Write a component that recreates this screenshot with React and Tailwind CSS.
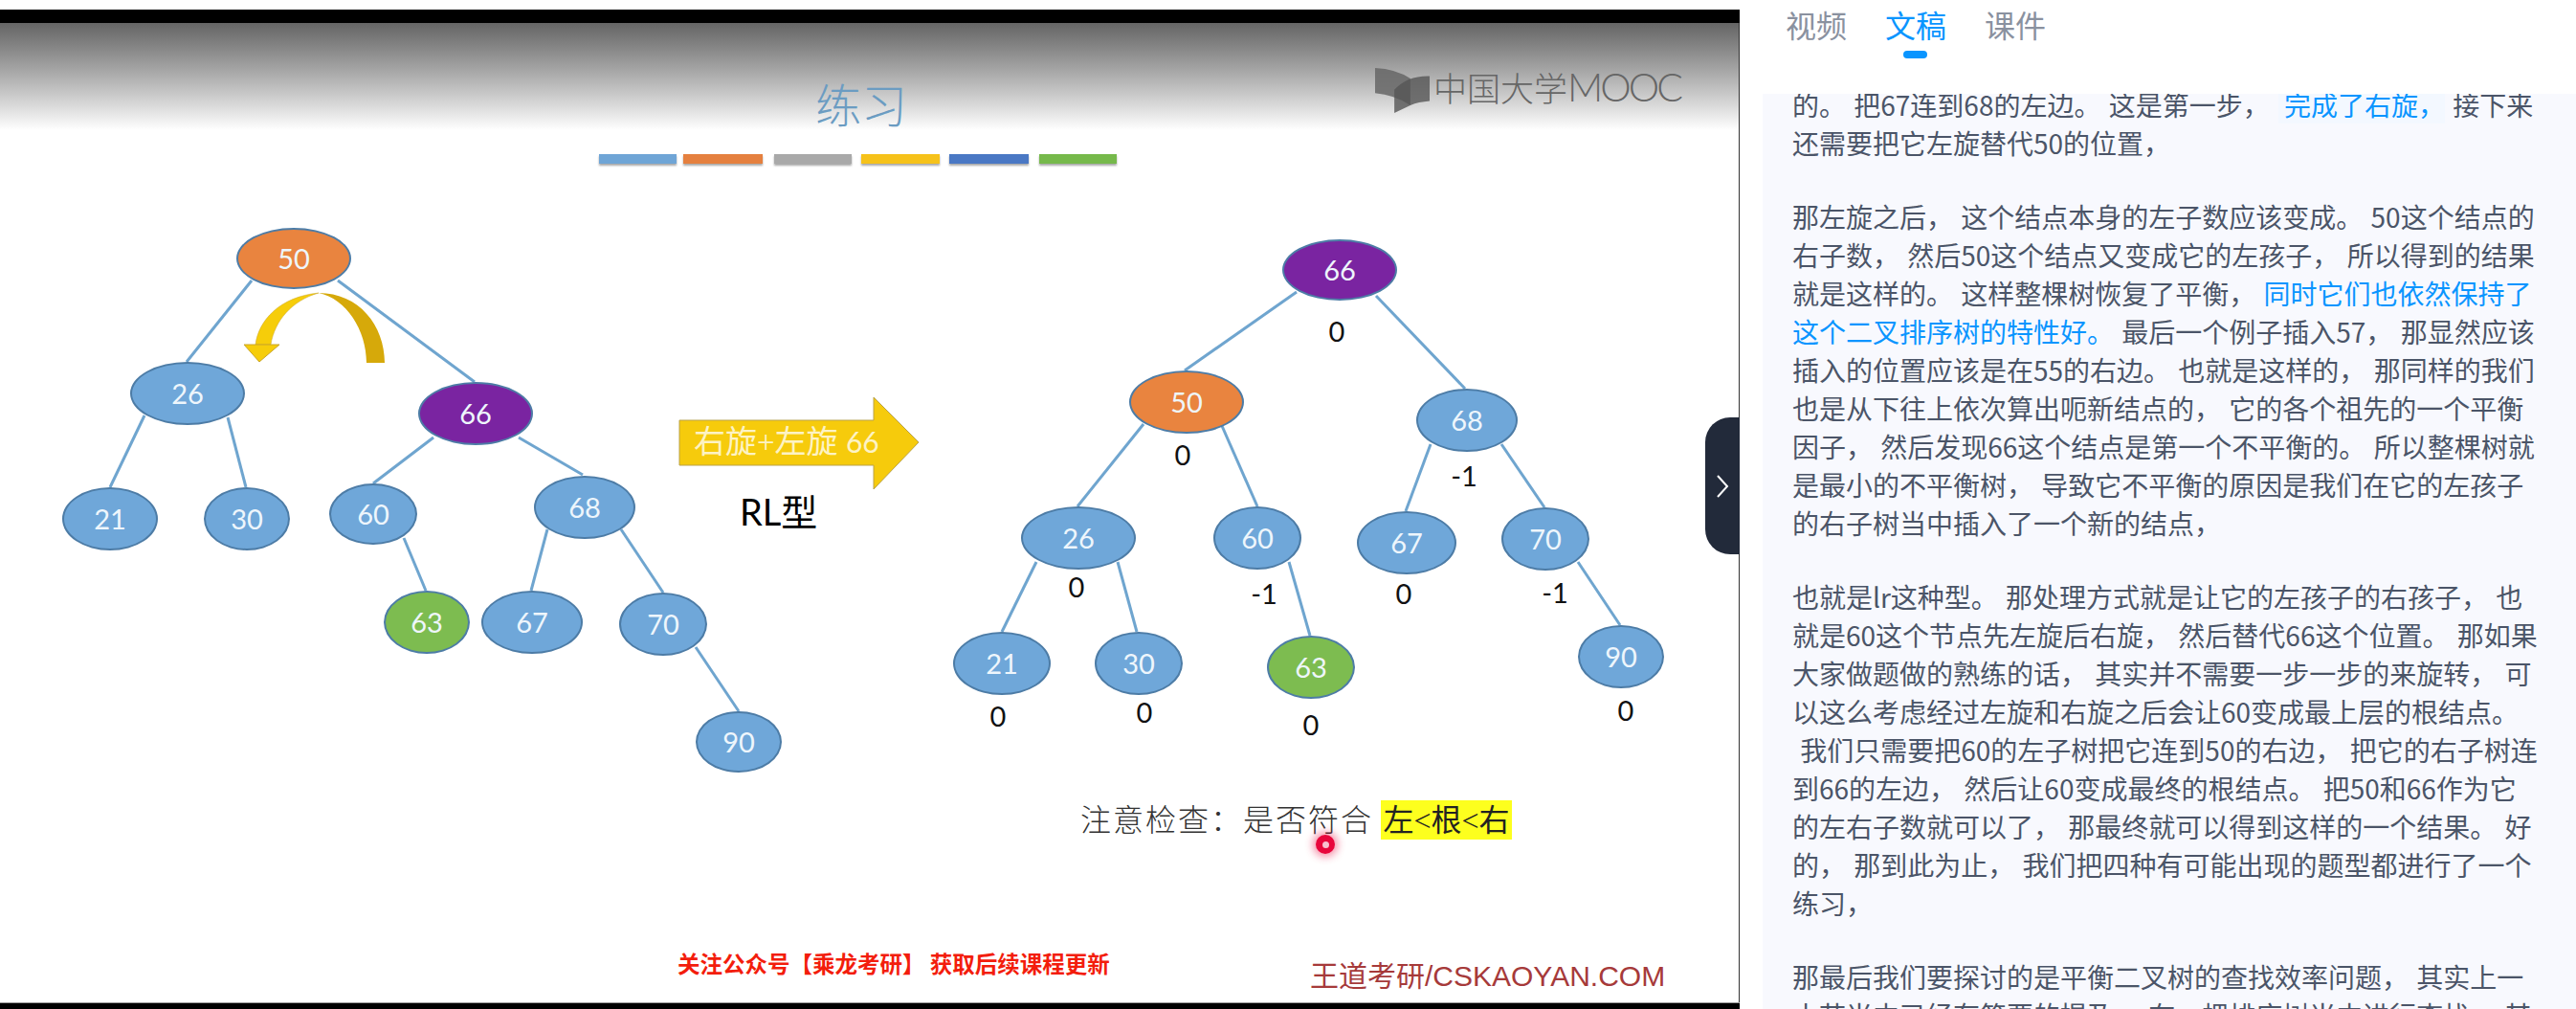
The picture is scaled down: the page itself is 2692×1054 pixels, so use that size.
import React from "react";

const BLUE = "#6fa7d9";
const ORANGE = "#e9843f";
const PURPLE = "#7a24a1";
const GREEN = "#7dbc50";

const nodes = [
  [307, 270, 60, 32, "50", ORANGE], [196, 411, 60, 33, "26", BLUE], [497, 432, 60, 33, "66", PURPLE],
  [115, 542, 50, 33, "21", BLUE], [258, 542, 45, 33, "30", BLUE], [390, 537, 46, 32, "60", BLUE],
  [611, 530, 53, 33, "68", BLUE], [446, 650, 45, 33, "63", GREEN], [556, 650, 53, 33, "67", BLUE],
  [693, 652, 46, 33, "70", BLUE], [772, 775, 45, 32, "90", BLUE],
  [1400, 282, 60, 32, "66", PURPLE], [1240, 420, 60, 33, "50", ORANGE], [1533, 439, 53, 33, "68", BLUE],
  [1127, 562, 60, 33, "26", BLUE], [1314, 562, 46, 33, "60", BLUE], [1470, 567, 52, 33, "67", BLUE],
  [1615, 563, 46, 33, "70", BLUE], [1047, 693, 51, 33, "21", BLUE], [1190, 693, 46, 33, "30", BLUE],
  [1370, 697, 46, 33, "63", GREEN], [1694, 686, 45, 33, "90", BLUE],
];

const edges = [
  [263, 293, 195, 378], [353, 293, 496, 399], [151, 434, 115, 509], [238, 436, 257, 509],
  [453, 457, 390, 505], [542, 457, 609, 496], [422, 562, 445, 617], [572, 553, 555, 617],
  [649, 553, 693, 619], [727, 676, 772, 743],
  [1355, 305, 1238, 387], [1438, 309, 1531, 406], [1195, 443, 1126, 529], [1277, 445, 1314, 529],
  [1495, 464, 1469, 534], [1569, 464, 1614, 530], [1083, 587, 1047, 660], [1168, 587, 1188, 660],
  [1347, 587, 1369, 664], [1649, 587, 1693, 653],
];

const factors = [
  [1397, 346, "0"], [1236, 475, "0"], [1530, 497, "-1"], [1125, 613, "0"], [1321, 620, "-1"],
  [1467, 620, "0"], [1625, 619, "-1"], [1043, 748, "0"], [1196, 744, "0"], [1370, 757, "0"], [1699, 742, "0"],
];

const bars = [
  [626, 81, "#6fa5d6"], [714, 83, "#e5803f"], [809, 81, "#a9a9a9"],
  [900, 82, "#f6c21a"], [992, 83, "#4a78c4"], [1086, 81, "#76b94b"],
];

function Node({ n }) {
  const [cx, cy, rx, ry, label, color] = n;
  return (
    <div
      className="absolute flex items-center justify-center rounded-[50%] border-2 border-[#4d7ca6] text-[29px] text-[#eef6fc] font-['Lato',sans-serif]"
      style={{ left: cx - rx, top: cy - ry, width: rx * 2, height: ry * 2, backgroundColor: color }}
    >
      {label}
    </div>
  );
}

function B({ children }) {
  return <span className="text-[#0a95ff]">{children}</span>;
}

const paragraphs = [
  [
    <>的。 把67连到68的左边。 这是第一步， <span className="ml-[1px] bg-[#f3f8ff] pl-[6px] text-[#0a95ff]">完成了右旋，</span> 接下来</>,
    "还需要把它左旋替代50的位置，",
  ],
  [
    "那左旋之后， 这个结点本身的左子数应该变成。 50这个结点的",
    "右子数， 然后50这个结点又变成它的左孩子， 所以得到的结果",
    <>就是这样的。 这样整棵树恢复了平衡， <B>同时它们也依然保持了</B></>,
    <><B>这个二叉排序树的特性好。</B> 最后一个例子插入57， 那显然应该</>,
    "插入的位置应该是在55的右边。 也就是这样的， 那同样的我们",
    "也是从下往上依次算出呃新结点的， 它的各个祖先的一个平衡",
    "因子， 然后发现66这个结点是第一个不平衡的。 所以整棵树就",
    "是最小的不平衡树， 导致它不平衡的原因是我们在它的左孩子",
    "的右子树当中插入了一个新的结点，",
  ],
  [
    "也就是lr这种型。 那处理方式就是让它的左孩子的右孩子， 也",
    "就是60这个节点先左旋后右旋， 然后替代66这个位置。 那如果",
    "大家做题做的熟练的话， 其实并不需要一步一步的来旋转， 可",
    "以这么考虑经过左旋和右旋之后会让60变成最上层的根结点。",
    " 我们只需要把60的左子树把它连到50的右边， 把它的右子树连",
    "到66的左边， 然后让60变成最终的根结点。 把50和66作为它",
    "的左右子数就可以了， 那最终就可以得到这样的一个结果。 好",
    "的， 那到此为止， 我们把四种有可能出现的题型都进行了一个",
    "练习，",
  ],
  [
    "那最后我们要探讨的是平衡二叉树的查找效率问题， 其实上一",
    "小节当中已经有简要的提及。 在一棵排序树当中进行查找， 其",
  ],
];

function Slide() {
  return (
    <div className="relative h-[1054px] w-[1818px] shrink-0 overflow-hidden bg-white">
      <div className="flex h-full flex-col pt-[10px]">
        <div className="h-[14px] bg-black" />
        <div className="flex flex-1 flex-col border-r border-[#333]">
          <div className="h-[112px] bg-gradient-to-b from-[#656565] to-white" />
        </div>
        <div className="h-[7px] border-t border-[#999] bg-black" />
      </div>

      <div className="absolute left-[852px] top-[78px] text-[48px] leading-[58px] text-[#6b9cc2] font-['Noto_Sans_CJK_SC',sans-serif] font-light">
        练习
      </div>

      {bars.map(([x, w, c]) => (
        <div
          key={x}
          className="absolute top-[161px] h-[10px] shadow-[0_2px_2px_rgba(0,0,0,0.35)]"
          style={{ left: x, width: w, backgroundColor: c }}
        />
      ))}

      <svg className="absolute left-[1437px] top-[71px]" width="57" height="47" viewBox="170 122 170 140">
        <path d="M170 122 Q235 125 280 155 L280 238 Q230 205 170 200 Z" fill="#666" fillOpacity="0.85" />
        <path d="M340 147 Q270 145 230 190 L230 262 L280 238 Q305 228 340 225 Z" fill="#555" fillOpacity="0.8" />
      </svg>
      <div className="absolute left-[1498px] top-[68px] flex items-center leading-[46px] text-[#666] font-light">
        <span className="text-[35px] font-['Noto_Sans_CJK_SC',sans-serif] font-light">中国大学</span>
        <span className="text-[41px] font-['Lato',sans-serif] font-light tracking-[-3px]">MOOC</span>
      </div>

      <svg className="absolute left-0 top-0" width="1818" height="1054">
        {edges.map(([a, b, c, d], i) => (
          <line key={i} x1={a} y1={b} x2={c} y2={d} stroke="#6fa5cf" strokeWidth="3" />
        ))}
        <path d="M267 360 C270 335 292 310 333 306 C305 314 287 335 283 360 Z" fill="#f6cd0a" stroke="#c9a52a" strokeWidth="0.5" />
        <path d="M333 306 C375 306 402 340 402 379 L383 379 C383 345 362 312 333 306 Z" fill="#d6a90a" />
        <path d="M255 360 L292 360 L271 378 Z" fill="#f6cd0a" stroke="#c9a52a" strokeWidth="1" />
        <path d="M710 439 L913 439 L913 415 L960 462 L913 511 L913 486 L710 486 Z" fill="#f6cb0c" stroke="#b9a24a" strokeWidth="1" />
      </svg>

      {nodes.map((n, i) => (
        <Node key={i} n={n} />
      ))}

      {factors.map(([x, y, t], i) => (
        <div
          key={i}
          className="absolute w-[60px] -translate-x-1/2 -translate-y-1/2 text-center text-[29px] leading-[34px] text-[#111] font-['Lato',sans-serif]"
          style={{ left: x, top: y }}
        >
          {t}
        </div>
      ))}

      <div className="absolute left-[725px] top-[441px] whitespace-pre text-[33px] leading-[40px] text-[#fdf3c4] font-['Liberation_Serif','Noto_Sans_CJK_SC',sans-serif]">
        右旋+左旋 <span className="font-['Lato',sans-serif] text-[30px]">66</span>
      </div>

      <div className="absolute left-[773px] top-[511px] whitespace-pre text-[38px] leading-[46px] text-black font-['Lato','Noto_Sans_CJK_SC',sans-serif]">
        RL型
      </div>

      <div className="absolute left-[1129px] top-[836px] flex h-[41px] items-center whitespace-pre text-[32px] text-[#333] font-['Liberation_Serif','Noto_Sans_CJK_SC',serif]">
        <span className="w-[314px] font-light tracking-[2px]">注意检查：是否符合</span>
        <span className="flex h-[41px] w-[137px] items-center justify-center bg-[#fdff1e] text-[#222]">左&lt;根&lt;右</span>
      </div>

      <div className="absolute left-[1375px] top-[872px] flex h-[20px] w-[20px] items-center justify-center rounded-full bg-[#e8063c] shadow-[0_0_8px_3px_rgba(232,6,60,0.45)]">
        <div className="h-[7px] w-[7px] rounded-full bg-[#f8c0d0]" />
      </div>

      <div className="absolute left-[708px] top-[990px] whitespace-pre text-[23.5px] font-bold leading-[32px] text-[#f31d0c] font-['Noto_Sans_CJK_SC',sans-serif]">
        关注公众号【乘龙考研】 获取后续课程更新
      </div>

      <div className="absolute left-[1369px] top-[1000px] whitespace-pre text-[30px] leading-[40px] text-[#a63a3a] font-['Liberation_Sans','Noto_Sans_CJK_SC',sans-serif]">
        王道考研/CSKAOYAN.COM
      </div>

      <div className="absolute left-[1782px] top-[436px] flex h-[143px] w-[36px] items-center justify-center rounded-l-[26px] bg-[#222a3a]">
        <svg width="14" height="24" viewBox="0 0 14 24" fill="none">
          <path d="M2 1 L12 12 L2 23" stroke="#fff" strokeWidth="2" />
        </svg>
      </div>
    </div>
  );
}

function Transcript() {
  return (
    <div className="flex h-[1054px] flex-1 flex-col overflow-hidden bg-white pl-[24px] font-['Noto_Sans_CJK_SC',sans-serif]">
      <div className="flex h-[98px] shrink-0 items-start gap-[40px] pl-[24px] pt-[2px] text-[32px] leading-[46px] text-[#8a919f]">
        <span>视频</span>
        <div className="relative text-[#0a95ff]">
          文稿
          <div className="absolute left-[19px] top-[51px] h-[8px] w-[25px] rounded-full bg-[#0a95ff]" />
        </div>
        <span>课件</span>
      </div>
      <div className="flex-1 overflow-hidden bg-[#f8f9fe] pl-[31px]">
        <div className="-mt-[9px] flex flex-col gap-[37px] text-[28px] leading-[40px] text-[#4b5568] [word-spacing:2px]">
          {paragraphs.map((lines, i) => (
            <div key={i}>
              {lines.map((l, j) => (
                <div key={j} className="whitespace-pre">
                  {l}
                </div>
              ))}
            </div>
          ))}
        </div>
      </div>
    </div>
  );
}

export default function App() {
  return (
    <div className="flex h-[1054px] w-[2692px] overflow-hidden bg-white">
      <Slide />
      <Transcript />
    </div>
  );
}
